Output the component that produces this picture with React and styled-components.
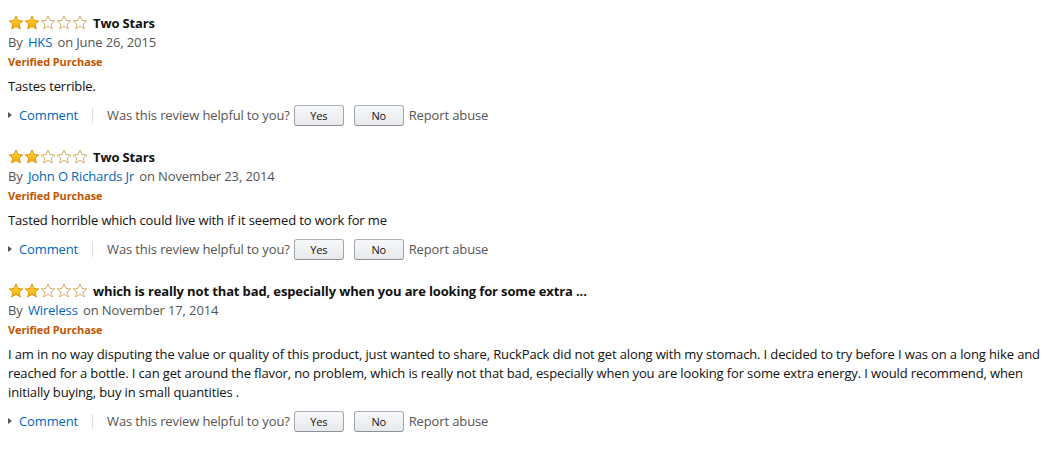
import React from "react";
import styled, { createGlobalStyle } from "styled-components";

const GlobalStyle = createGlobalStyle`
  body {
    margin: 0;
    background: #fff;
    font-family: "Open Sans", "Liberation Sans", Arial, sans-serif;
    font-size: 13px;
    letter-spacing: -0.13px;
    color: #111;
  }
`;

const reviews = [
  {
    stars: 2,
    title: "Two Stars",
    author: "HKS",
    date: "June 26, 2015",
    body: "Tastes terrible.",
  },
  {
    stars: 2,
    title: "Two Stars",
    author: "John O Richards Jr",
    date: "November 23, 2014",
    body: "Tasted horrible which could live with if it seemed to work for me",
  },
  {
    stars: 2,
    title:
      "which is really not that bad, especially when you are looking for some extra ...",
    author: "Wireless",
    date: "November 17, 2014",
    body: "I am in no way disputing the value or quality of this product, just wanted to share, RuckPack did not get along with my stomach. I decided to try before I was on a long hike and reached for a bottle. I can get around the flavor, no problem, which is really not that bad, especially when you are looking for some extra energy. I would recommend, when initially buying, buy in small quantities .",
  },
];

const STAR =
  "M8 1 L10 5.5 L14.8 5.9 L11.2 9.1 L12.3 13.9 L8 11.4 L3.7 13.9 L4.8 9.1 L1.2 5.9 L6 5.5 Z";

function Stars({ count }) {
  return (
    <StarSvg width="80" height="15" viewBox="0 0 80 15">
      <defs>
        <linearGradient id="gold" x1="0" y1="0" x2="0" y2="1">
          <stop offset="0" stopColor="#ffd84a" />
          <stop offset="1" stopColor="#f5a800" />
        </linearGradient>
      </defs>
      {[0, 1, 2, 3, 4].map((i) => (
        <path
          key={i}
          d={STAR}
          transform={`translate(${i * 16} 0)`}
          fill={i < count ? "url(#gold)" : "#fff"}
          stroke={i < count ? "#de8f00" : "#cfa65a"}
          strokeWidth="0.9"
          strokeLinejoin="round"
        />
      ))}
    </StarSvg>
  );
}

function Review({ review }) {
  return (
    <ReviewBlock>
      <TitleRow>
        <Stars count={review.stars} />
        <Title>{review.title}</Title>
      </TitleRow>
      <Byline>
        By <Author>{review.author}</Author> on {review.date}
      </Byline>
      <Verified>Verified Purchase</Verified>
      <Body>{review.body}</Body>
      <Actions>
        <Caret />
        <Link>Comment</Link>
        <Divider />
        <Muted>Was this review helpful to you?</Muted>
        <VoteButton>Yes</VoteButton>
        <VoteButton>No</VoteButton>
        <Muted>Report abuse</Muted>
      </Actions>
    </ReviewBlock>
  );
}

export default function App() {
  return (
    <Page>
      <GlobalStyle />
      {reviews.map((r, i) => (
        <Review key={i} review={r} />
      ))}
    </Page>
  );
}

const Page = styled.div`
  padding: 13px 8px 0 8px;
`;

const ReviewBlock = styled.div`
  margin-bottom: 21px;
`;

const TitleRow = styled.div`
  display: flex;
  align-items: center;
  height: 20px;
`;

const StarSvg = styled.svg`
  display: block;
  flex: none;
  margin-right: 5px;
  margin-top: -1px;
`;

const Title = styled.span`
  font-weight: 700;
  color: #111;
  white-space: nowrap;
`;

const Byline = styled.div`
  line-height: 19px;
  color: #555;
`;

const Link = styled.a`
  color: #0066c0;
  cursor: pointer;
`;

const Author = styled(Link)`
  margin: 0 2px;
`;

const Verified = styled.div`
  line-height: 20px;
  font-size: 11px;
  font-weight: 700;
  color: #c45500;
`;

const Body = styled.div`
  margin-top: 5px;
  line-height: 19px;
  color: #111;
`;

const Actions = styled.div`
  margin-top: 8px;
  height: 22px;
  display: flex;
  align-items: center;
  color: #555;
`;

const Caret = styled.span`
  width: 0;
  height: 0;
  border-top: 3px solid transparent;
  border-bottom: 3px solid transparent;
  border-left: 4px solid #555;
  margin-right: 7px;
`;

const Divider = styled.span`
  width: 1px;
  height: 15px;
  background: #ddd;
  margin: 0 14px 0 14px;
`;

const Muted = styled.span`
  color: #555;
  white-space: nowrap;
`;

const VoteButton = styled.button`
  width: 50px;
  height: 21px;
  margin: 0 5px 0 4px;
  padding: 0;
  border: 1px solid #adb1b8;
  border-color: #adb1b8 #a2a6ac #8d9096;
  border-radius: 3px;
  background: linear-gradient(to bottom, #f7f8fa, #e7e9ec);
  font-family: inherit;
  font-size: 11px;
  letter-spacing: inherit;
  color: #111;
  cursor: pointer;
  & + & {
    margin-left: 5px;
    margin-right: 5px;
  }
`;
